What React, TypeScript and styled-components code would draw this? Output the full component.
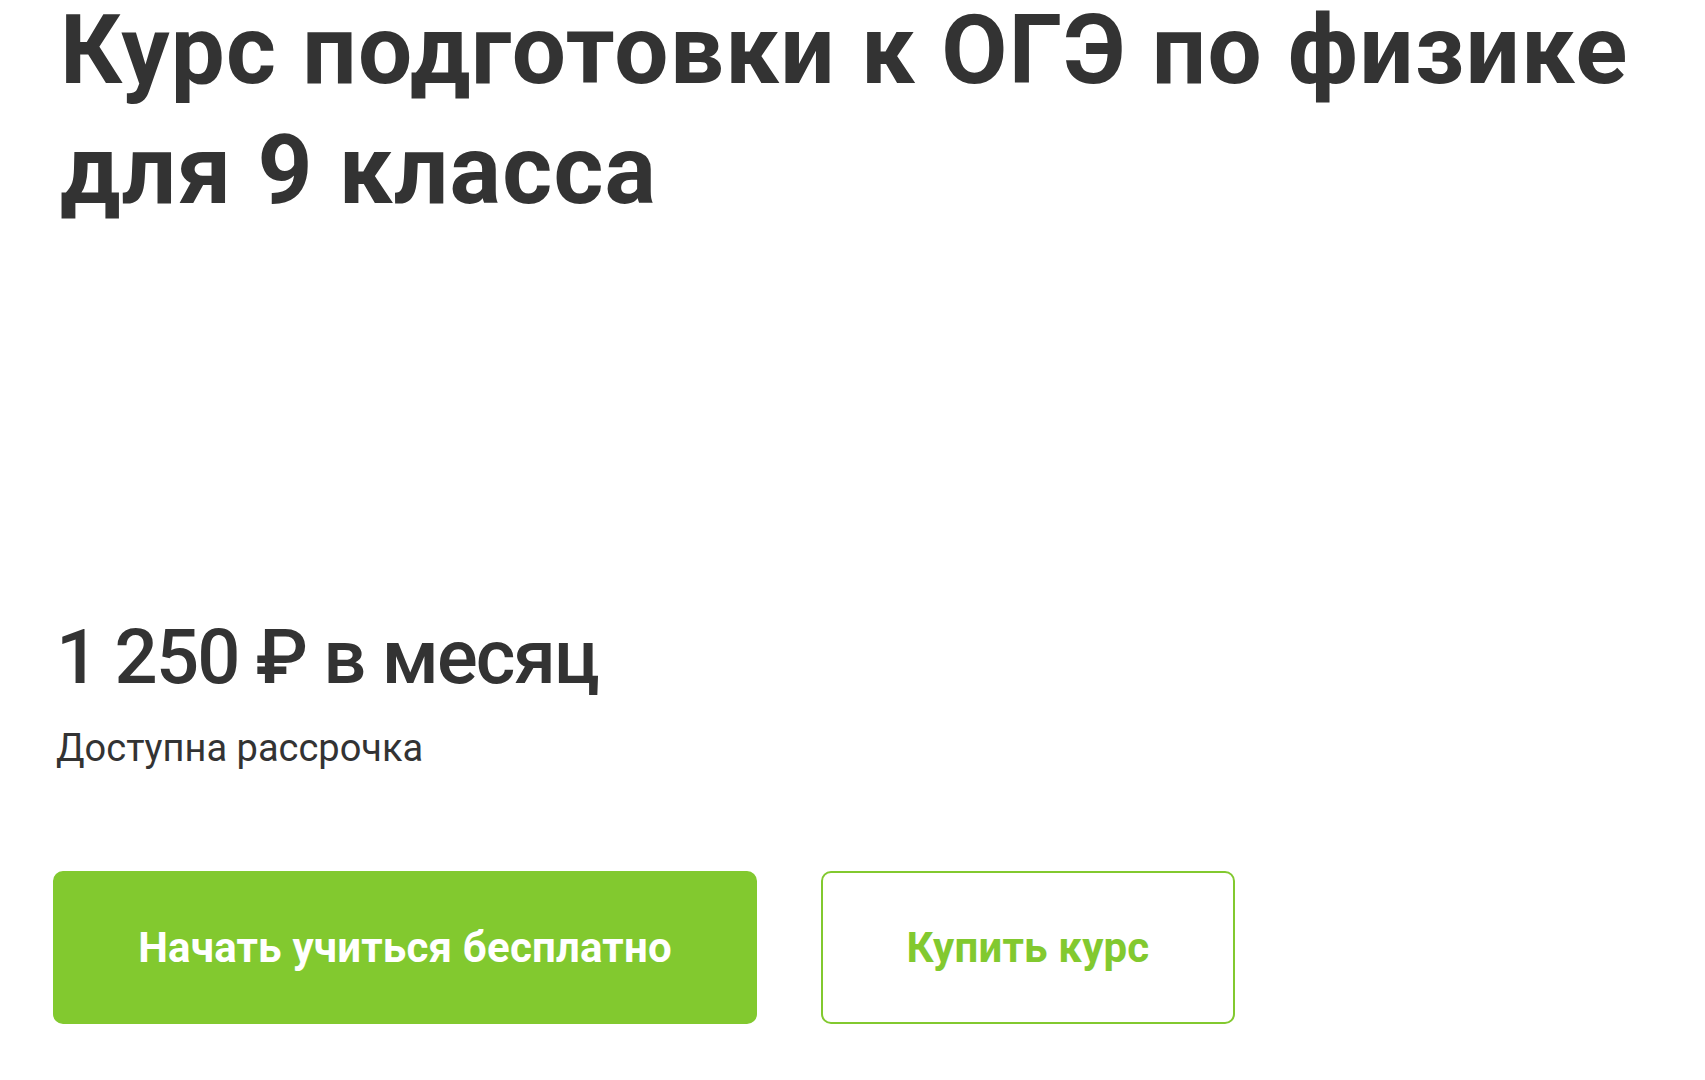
import React from "react";
import styled, { createGlobalStyle } from "styled-components";

const Global = createGlobalStyle`
  html, body { margin: 0; padding: 0; background: #ffffff; }
  body { font-family: Roboto, "Noto Sans", sans-serif; color: #333333; }
  * { box-sizing: border-box; }
`;

const Page = styled.main`
  width: 1705px;
  height: 1080px;
  overflow: hidden;
  padding: 0 0 0 56px;
  display: flex;
  flex-direction: column;
`;

const Title = styled.h1`
  margin: -10px 0 0 4px;
  font-family: Roboto, "Noto Sans", sans-serif;
  font-weight: 700;
  font-size: 96px;
  line-height: 120px;
  letter-spacing: 1.2px;
  color: #333333;
  white-space: nowrap;
`;

const PriceBlock = styled.section`
  margin-top: 382px;
  display: flex;
  flex-direction: column;
`;

const Price = styled.div`
  font-family: Roboto, "Liberation Sans", sans-serif;
  font-weight: 500;
  font-size: 76px;
  line-height: 90px;
  color: #333333;
  letter-spacing: -1.8px;
`;

const Note = styled.div`
  font-family: Roboto, "Liberation Sans", sans-serif;
  font-weight: 400;
  font-size: 38px;
  line-height: 50px;
  color: #333333;
  margin-top: 21px;
`;

const Actions = styled.div`
  display: flex;
  gap: 64px;
  margin-top: 98px;
  margin-left: -3px;
`;

const Button = styled.button<{ $variant: "solid" | "outline"; $w: number }>`
  width: ${(p) => p.$w}px;
  height: 153px;
  border-radius: 10px;
  border: 2px solid #82c92f;
  background: ${(p) => (p.$variant === "solid" ? "#82c92f" : "#ffffff")};
  color: ${(p) => (p.$variant === "solid" ? "#ffffff" : "#82c92f")};
  font-family: Roboto, "Liberation Sans", sans-serif;
  font-weight: 700;
  font-size: 42px;
  letter-spacing: 0.2px;
  display: flex;
  align-items: center;
  justify-content: center;
  padding: 0;
  cursor: pointer;
`;

export default function App() {
  return (
    <>
      <Global />
      <Page>
        <Title>
          Курс подготовки к ОГЭ по физике
          <br />
          для 9 класса
        </Title>
        <PriceBlock>
          <Price>1 250 ₽ в месяц</Price>
          <Note>Доступна рассрочка</Note>
        </PriceBlock>
        <Actions>
          <Button $variant="solid" $w={704}>Начать учиться бесплатно</Button>
          <Button $variant="outline" $w={414}>Купить курс</Button>
        </Actions>
      </Page>
    </>
  );
}
